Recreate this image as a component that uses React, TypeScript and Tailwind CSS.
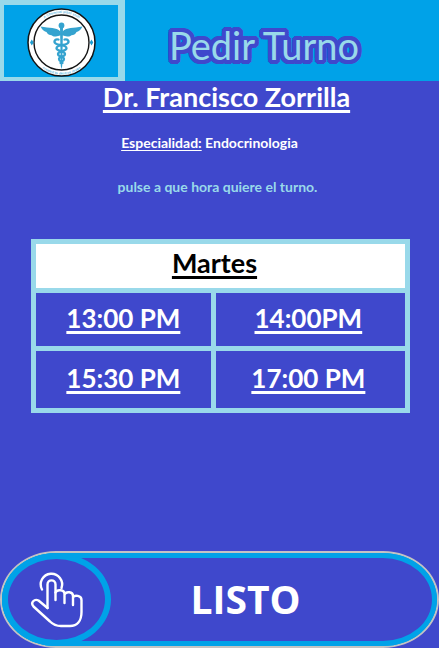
const rows = [
  { height: "h-[53px]", hours: ["13:00 PM", "14:00PM"] },
  { height: "h-[57px]", hours: ["15:30 PM", "17:00 PM"] },
];

function Logo() {
  return (
    <svg viewBox="0 0 114 72" className="block h-[72px] w-[114px]" role="img" aria-label="Caduceo">
      <defs>
        <path id="ringTop" d="M28 37.500 A29.500 29.500 0 0 1 87 37.500" />
        <path id="ringBottom" d="M25.500 37.500 A32 32 0 0 0 89.500 37.500" />
      </defs>
      <circle cx="57.5" cy="37.5" r="33.5" fill="#fff" stroke="#141414" strokeWidth="1.5" />
      <circle cx="57.5" cy="37.5" r="27.5" fill="#fff" stroke="#141414" strokeWidth="1.4" />
      <g fill="#2aa5d8" fillOpacity="0.75" fontFamily="Liberation Sans, sans-serif" fontSize="3.5" textAnchor="middle">
        <text><textPath href="#ringTop" startOffset="50%">A Chemical plant stuff</textPath></text>
        <text><textPath href="#ringBottom" startOffset="50%">created to destroy drugs</textPath></text>
      </g>
      <path d="M27.800 34.500l1.800 3-1.800 3-1.800-3zM87.500 34.500l1.800 3-1.800 3-1.800-3z" fill="#1b9bd0" />
      <g fill="#35a3cf">
        <circle cx="57.500" cy="20.500" r="2.900" />
        <path d="M56 23h3l-.8 38-.7 3-.7-3z" />
        <path d="M56.500 26.500C52 22 46 23.500 36.500 21.500c2 4 4 5 6 5.500 1 2.300 3 3 5 3.200 1.500 1.500 3.500 1.500 5.500 1 1.500-.3 3-1 4.500-1z" />
        <path d="M58.500 26.500C63 22 69 23.500 78.500 21.500c-2 4-4 5-6 5.500-1 2.300-3 3-5 3.200-1.500 1.500-3.500 1.500-5.500 1-1.500-.3-3-1-4.500-1z" />
      </g>
      <g fill="none" stroke="#35a3cf" strokeWidth="2.300" strokeLinecap="round">
        <path d="M54.500 34.500c-4-1-5.500 3-2 4.500 3 1.300 10 1 10 4.300s-8.500 2.500-8.500 5.700 6 2 6 5-3.500 2-3.500 4" />
        <path d="M60.500 34.500c4-1 5.500 3 2 4.500-3 1.300-10 1-10 4.300s8.500 2.500 8.500 5.700-6 2-6 5 3.500 2 3.500 4" />
      </g>
    </svg>
  );
}

function TapHand() {
  return (
    <svg viewBox="0 0 54 56" className="h-14 w-[54px]" fill="none" stroke="#fff" strokeWidth="2.400" strokeLinecap="round" strokeLinejoin="round" aria-hidden="true">
      <path d="M12 17.500A10.700 10.700 0 1 1 31.500 16" />
      <path d="M17.500 36V12.500c0-5.500 8-5.500 8 0V28" />
      <path d="M25.500 20.500c1.500-3.500 9-3 9 1.500V31M34.500 22.500c1.500-3.500 8.500-3 8.500 1.500V33M43 25.500c1.500-3 8.500-2 8.500 2.500v12c0 9-4.500 14-11.500 14H31c-5 0-8-1.500-11-4.500L3.500 34.500C0 30.500 4.500 26.500 8.500 28.500l9 7.500" />
    </svg>
  );
}

export default function App() {
  return (
    <main className="flex min-h-screen flex-col bg-[#3f48cc] font-['Lato',sans-serif] font-bold text-white">
      <header className="flex h-[81px] bg-[#00a2e8]">
        <div className="shrink-0 border-t-[5px] border-r-[7px] border-b-4 border-l-4 border-[#99d9ea]">
          <Logo />
        </div>
        <h1 className="flex-1 pt-[18px] pr-9 text-center text-[38px] leading-[54px] font-normal whitespace-nowrap text-[#99d9ea] [text-shadow:4px_0_#3f48cc,-4px_0_#3f48cc,0_4px_#3f48cc,0_-4px_#3f48cc,3px_3px_#3f48cc,-3px_3px_#3f48cc,3px_-3px_#3f48cc,-3px_-3px_#3f48cc,4px_2px_#3f48cc,-4px_2px_#3f48cc,4px_-2px_#3f48cc,-4px_-2px_#3f48cc,2px_4px_#3f48cc,-2px_4px_#3f48cc,2px_-4px_#3f48cc,-2px_-4px_#3f48cc,2px_0_#3f48cc,-2px_0_#3f48cc]">
          Pedir Turno
        </h1>
      </header>

      <section className="flex flex-col items-center text-center">
        <h2 className="pl-[14px] text-[27px] leading-8">
          <span className="underline decoration-[3px] underline-offset-[3px] [text-decoration-skip-ink:none]">Dr. Francisco Zorrilla</span>
        </h2>
        <p className="mt-5 pr-5 text-[14px] leading-5">
          <span className="underline decoration-1 underline-offset-2 [text-decoration-skip-ink:none]">Especialidad:</span> Endocrinologia
        </p>
        <p className="mt-6 pr-1 text-[14px] leading-5 text-[#99d9ea]">pulse a que hora quiere el turno.</p>
      </section>

      <div className="mt-[42px] pr-[29px] pl-[31px]">
        <table className="w-full table-fixed border-separate border-spacing-[5px] bg-[#99d9ea] text-[26px] leading-8">
          <colgroup>
            <col className="w-[48%]" />
            <col />
          </colgroup>
          <thead>
            <tr className="h-11">
              <th colSpan={2} scope="colgroup" className="bg-white p-0 pr-3 pb-1.5 text-[27px] text-black">
                <span className="underline decoration-[3px] underline-offset-[3px]">Martes</span>
              </th>
            </tr>
          </thead>
          <tbody>
            {rows.map((row) => (
              <tr key={row.height} className={row.height}>
                {row.hours.map((hour) => (
                  <td key={hour} className="bg-[#3f48cc] p-0 pb-1 text-center last:pr-1">
                    <button type="button" className="w-full underline decoration-[3px] underline-offset-[3px]">
                      {hour}
                    </button>
                  </td>
                ))}
              </tr>
            ))}
          </tbody>
        </table>
      </div>

      <button type="button" className="mt-auto flex h-[97px] w-full rounded-[56px/50%] border-2 border-[#c3c3c3] bg-[#00a2e8]">
        <span className="flex h-full flex-1 rounded-[54px/50%] border-[5px] border-[#00a2e8] bg-[#3f48cc]">
          <span className="-my-[5px] -ml-[5px] flex w-[109px] items-center justify-center rounded-[50%] border-[6px] border-[#00a2e8]">
            <TapHand />
          </span>
          <span className="flex h-full flex-1 items-center justify-center pr-[52px] font-['Open_Sans',sans-serif] text-[39px]">LISTO</span>
        </span>
      </button>
    </main>
  );
}
